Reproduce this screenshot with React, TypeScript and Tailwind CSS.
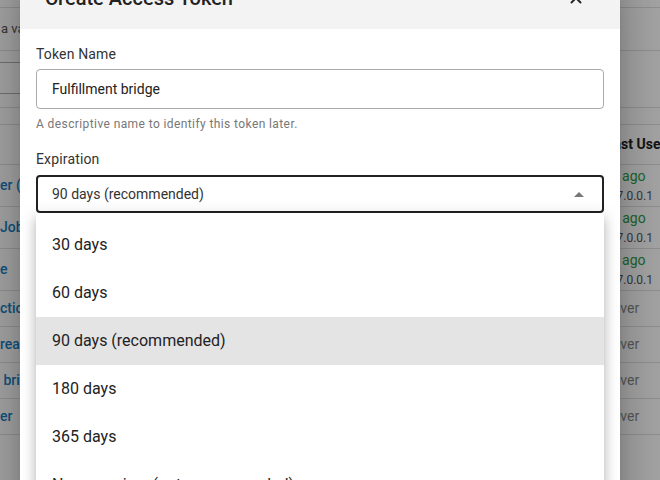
import { X } from "lucide-react";

const rows = [
  { name: "er (read)", last: "2h ago", ip: "127.0.0.1", tall: true },
  { name: "Jobs", last: "5d ago", ip: "127.0.0.1", tall: true },
  { name: "e", last: "1h ago", ip: "127.0.0.1", tall: true },
  { name: "ctions", last: "Never", ip: "", tall: false },
  { name: "reader", last: "Never", ip: "", tall: false },
  { name: "\u00a0bridge", last: "Never", ip: "", tall: false },
  { name: "er", last: "Never", ip: "", tall: false },
];

const options = [
  "30 days",
  "60 days",
  "90 days (recommended)",
  "180 days",
  "365 days",
  "Never expires (not recommended)",
];

export default function App() {
  return (
    <div className="relative w-[660px] h-[480px] overflow-hidden bg-white font-['Roboto',sans-serif]">
      {/* Underlying page */}
      <div className="flex flex-col">
        <div className="h-[8px] border-b border-[#e0e0e0]" />
        <div className="h-[43px] flex items-center border-b border-[#e0e0e0] text-[13px] text-[#555]">
          <span className="pl-[1px]">a valid scope</span>
        </div>
        <div className="h-[57px] border-b border-[#e0e0e0]">
          <div className="mt-[11px] h-[32px] w-[300px] border-y border-[#b0b0b0]" />
        </div>
        <div className="h-[17px] border-b border-[#e0e0e0]" />
        <div className="h-[40px] flex items-center border-b border-[#e0e0e0]">
          <div className="w-[606px] shrink-0" />
          <div className="shrink-0 text-[14px] font-bold text-[#222] whitespace-nowrap">Last Used</div>
        </div>
        {rows.map((r, i) => (
          <div
            key={i}
            className={
              r.tall
                ? "h-[42px] flex items-center border-b border-[#e0e0e0]"
                : "h-[36px] flex items-center border-b border-[#e0e0e0]"
            }
          >
            <div className="w-[603px] shrink-0 overflow-hidden text-[14px] font-medium text-[#1a7fc4] whitespace-nowrap">{r.name}</div>
            {r.ip ? (
              <div className="shrink-0 flex flex-col whitespace-nowrap">
                <span className="text-[14px] leading-[20px] text-[#2e9e44]">{r.last}</span>
                <span className="text-[12px] leading-[20px] text-[#555]">{r.ip}</span>
              </div>
            ) : (
              <div className="shrink-0 text-[14px] text-[#8a8a8a] whitespace-nowrap">{r.last}</div>
            )}
          </div>
        ))}
      </div>

      {/* Overlay */}
      <div className="absolute inset-0 bg-black/[0.36]" />

      {/* Modal */}
      <div className="absolute left-[20px] top-[-33px] w-[600px] h-[560px] bg-white rounded-[4px] shadow-[0_11px_15px_-7px_rgba(0,0,0,0.2),0_24px_38px_3px_rgba(0,0,0,0.14),0_9px_46px_8px_rgba(0,0,0,0.12)]">
        <div className="h-[62px] bg-[#f3f3f3] flex items-center justify-between pl-[25px] pr-[35px] rounded-t-[4px]">
          <h2 className="text-[20px] leading-[28px] font-medium text-[#222]">Create Access Token</h2>
          <X size={18} strokeWidth={2.5} className="text-[#222]" />
        </div>
        <div className="px-4 pt-[15px]">
          <label className="block text-[14px] leading-[20px] tracking-[0.15px] text-[#333]">Token Name</label>
          <div className="mt-[5px] h-[40px] border border-[#aaa] rounded-[4px] flex items-center px-[15px] text-[14px] text-[#222]">
            Fulfillment bridge
          </div>
          <p className="mt-[7px] text-[12px] leading-[16px] tracking-[0.4px] text-[#777]">
            A descriptive name to identify this token later.
          </p>
          <label className="mt-[17px] block text-[14px] leading-[20px] tracking-[0.15px] text-[#333]">Expiration</label>
          <div className="relative mt-[6px]">
            <div className="h-[38px] border-2 border-[#222] rounded-[4px] flex items-center justify-between pl-[14px] pr-[18px] text-[14px] text-[#333]">
              <span>90 days (recommended)</span>
              <svg width="10" height="5" viewBox="0 0 10 5">
                <polygon points="0,5 5,0 10,5" fill="#777" />
              </svg>
            </div>
            <div className="absolute left-0 right-0 top-full bg-white py-2 shadow-[0_5px_5px_-3px_rgba(0,0,0,0.2),0_8px_10px_1px_rgba(0,0,0,0.14),0_3px_14px_2px_rgba(0,0,0,0.12)]">
              {options.map((o) => (
                <div
                  key={o}
                  className={
                    o === "90 days (recommended)"
                      ? "h-[48px] flex items-center px-4 text-[16px] text-[#222] bg-[#e4e4e4]"
                      : "h-[48px] flex items-center px-4 text-[16px] text-[#222]"
                  }
                >
                  {o}
                </div>
              ))}
            </div>
          </div>
        </div>
      </div>
    </div>
  );
}
